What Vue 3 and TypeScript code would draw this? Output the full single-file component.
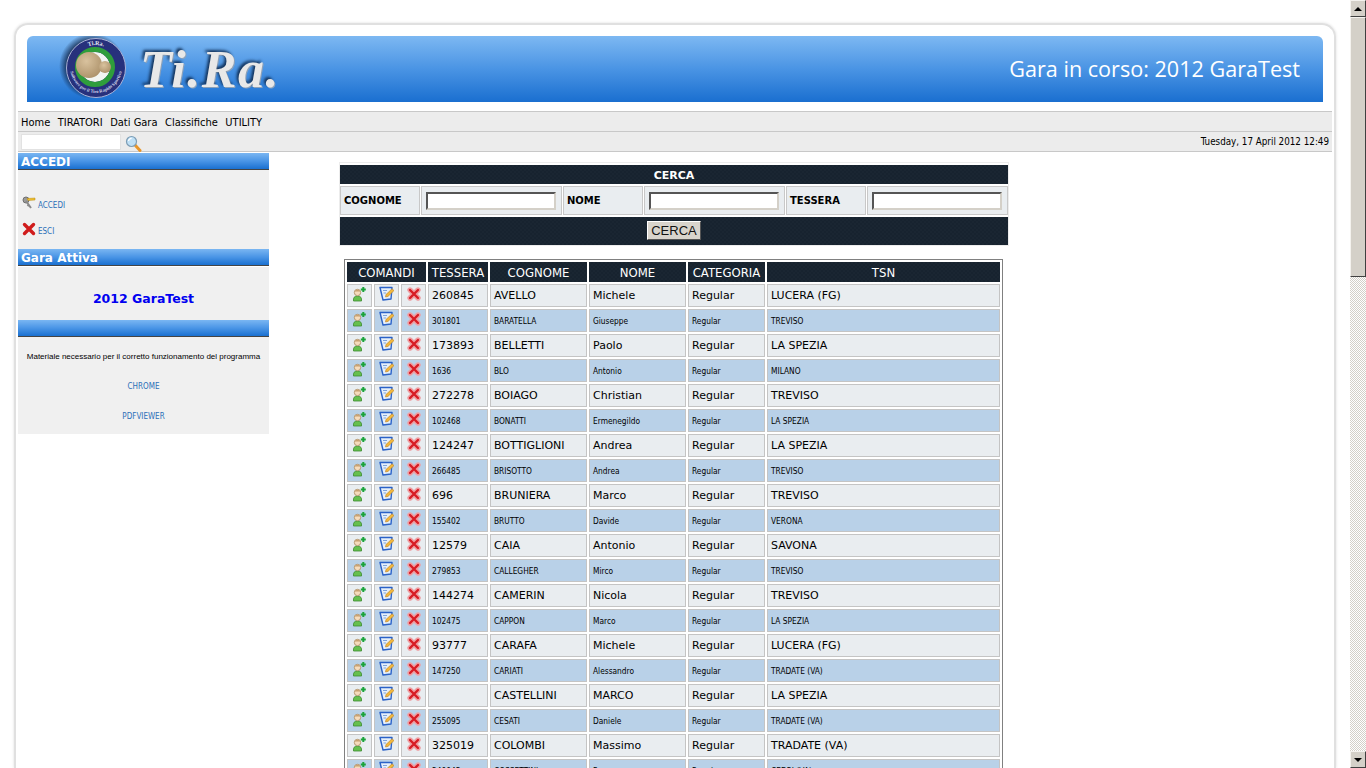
<script setup lang="ts">
interface Shooter {
    card: string;
    surname: string;
    name: string;
    club: string;
}

const menu = ['Home', 'TIRATORI', 'Dati Gara', 'Classifiche', 'UTILITY'];

const headers = ['TESSERA', 'COGNOME', 'NOME', 'CATEGORIA', 'TSN'];

const shooters: Shooter[] = [
    { card: '260845', surname: 'AVELLO', name: 'Michele', club: 'LUCERA (FG)' },
    { card: '301801', surname: 'BARATELLA', name: 'Giuseppe', club: 'TREVISO' },
    { card: '173893', surname: 'BELLETTI', name: 'Paolo', club: 'LA SPEZIA' },
    { card: '1636', surname: 'BLO', name: 'Antonio', club: 'MILANO' },
    { card: '272278', surname: 'BOIAGO', name: 'Christian', club: 'TREVISO' },
    { card: '102468', surname: 'BONATTI', name: 'Ermenegildo', club: 'LA SPEZIA' },
    { card: '124247', surname: 'BOTTIGLIONI', name: 'Andrea', club: 'LA SPEZIA' },
    { card: '266485', surname: 'BRISOTTO', name: 'Andrea', club: 'TREVISO' },
    { card: '696', surname: 'BRUNIERA', name: 'Marco', club: 'TREVISO' },
    { card: '155402', surname: 'BRUTTO', name: 'Davide', club: 'VERONA' },
    { card: '12579', surname: 'CAIA', name: 'Antonio', club: 'SAVONA' },
    { card: '279853', surname: 'CALLEGHER', name: 'Mirco', club: 'TREVISO' },
    { card: '144274', surname: 'CAMERIN', name: 'Nicola', club: 'TREVISO' },
    { card: '102475', surname: 'CAPPON', name: 'Marco', club: 'LA SPEZIA' },
    { card: '93777', surname: 'CARAFA', name: 'Michele', club: 'LUCERA (FG)' },
    { card: '147250', surname: 'CARIATI', name: 'Alessandro', club: 'TRADATE (VA)' },
    { card: '', surname: 'CASTELLINI', name: 'MARCO', club: 'LA SPEZIA' },
    { card: '255095', surname: 'CESATI', name: 'Daniele', club: 'TRADATE (VA)' },
    { card: '325019', surname: 'COLOMBI', name: 'Massimo', club: 'TRADATE (VA)' },
    { card: '240045', surname: 'COSSETTINI', name: 'Franco', club: 'CEDRI (VA)' },
];
</script>

<template>
    <div class="screen">
        <div class="page">
            <div class="frame">
                <header class="banner">
                    <svg class="logo" width="72" height="66" viewBox="0 0 72 66">
                        <defs>
                            <radialGradient id="logoShade" cx="0.5" cy="0.5" r="0.5">
                                <stop offset="0.75" stop-color="#0a1a3a" stop-opacity="0.8" />
                                <stop offset="1" stop-color="#0a1a3a" stop-opacity="0" />
                            </radialGradient>
                            <radialGradient id="ball" cx="0.4" cy="0.35" r="0.75">
                                <stop offset="0" stop-color="#d9c29e" />
                                <stop offset="1" stop-color="#a98e66" />
                            </radialGradient>
                            <path id="ringTop" d="M 15 32 A 23 23 0 0 1 61 32" />
                            <path id="ringBottom" d="M 12 31 A 26 26 0 0 0 64 31" />
                        </defs>
                        <circle cx="34" cy="30" r="33" fill="url(#logoShade)" />
                        <circle cx="38" cy="32" r="29.5" fill="#27317c" stroke="#aab2d6" stroke-width="1" />
                        <text class="ringText" fill="#e6e8f4" font-size="6"><textPath href="#ringTop" startOffset="50%" text-anchor="middle">Ti.Ra.</textPath></text>
                        <text class="ringText" fill="#d4d8ec" font-size="4.6"><textPath href="#ringBottom" startOffset="50%" text-anchor="middle">Software per il Tiro Rapido Sportivo</textPath></text>
                        <circle cx="37" cy="31" r="15" fill="#f2f5f2" />
                        <circle cx="37" cy="31" r="17.5" fill="none" stroke="#2f9e3c" stroke-width="5" />
                        <path d="M 38 23 L 46 31 L 38 39 Z" fill="#d81818" />
                        <circle cx="31" cy="29" r="13" fill="url(#ball)" />
                        <circle cx="47" cy="31" r="6" fill="url(#ball)" />
                    </svg>
                    <span class="brand">Ti.Ra.</span>
                    <span class="current">Gara in corso: 2012 GaraTest</span>
                </header>

                <nav class="menuBar">
                    <span v-for="item in menu" :key="item">{{ item }}</span>
                </nav>

                <div class="toolBar">
                    <input class="quickSearch" type="text" />
                    <svg class="lens" width="17" height="17" viewBox="0 0 17 17">
                        <path d="M10 10 L15 15.5" stroke="#e8962a" stroke-width="3" stroke-linecap="round" />
                        <circle cx="6.5" cy="6.5" r="5" fill="#bfe0f6" stroke="#7d9db5" stroke-width="1.2" />
                        <path d="M3.5 6 Q4 3.6 6.6 3.4" fill="none" stroke="#fff" stroke-width="1.2" />
                    </svg>
                    <span class="date">Tuesday, 17 April 2012 12:49</span>
                </div>

                <div class="body">
                    <aside class="side">
                        <h3 class="sideTitle">ACCEDI</h3>
                        <div class="sideBox loginBox">
                            <a class="sideLink">
                                <svg width="14" height="14" viewBox="0 0 14 14">
                                    <circle cx="4" cy="4" r="3" fill="#9a9a9a" stroke="#6f6f6f" />
                                    <path d="M4 5 L9 12 M7 8.5 L5.5 10" stroke="#8a8a8a" stroke-width="2" fill="none" />
                                    <path d="M5 2.5 L13 2 L13 4 L6 4.5 Z" fill="#f0c030" stroke="#b98a10" stroke-width="0.5" />
                                </svg>
                                <span>ACCEDI</span>
                            </a>
                            <a class="sideLink">
                                <svg width="14" height="14" viewBox="0 0 14 14">
                                    <path d="M2.5 2.5 L11.5 11.5 M11.5 2.5 L2.5 11.5" stroke="#d01c1c" stroke-width="3.4" stroke-linecap="round" />
                                </svg>
                                <span>ESCI</span>
                            </a>
                        </div>
                        <h3 class="sideTitle">Gara Attiva</h3>
                        <div class="sideBox activeBox">2012 GaraTest</div>
                        <h3 class="sideTitle emptyTitle"></h3>
                        <div class="sideBox infoBox">
                            <p class="infoText">Materiale necessario per il corretto funzionamento del programma</p>
                            <a class="infoLink">CHROME</a>
                            <a class="infoLink">PDFVIEWER</a>
                        </div>
                    </aside>

                    <main class="content">
                        <form class="searchBox" @submit.prevent>
                            <div class="searchTitle">CERCA</div>
                            <label class="searchLabel">COGNOME</label>
                            <div class="searchField"><input type="text" /></div>
                            <label class="searchLabel">NOME</label>
                            <div class="searchField"><input type="text" /></div>
                            <label class="searchLabel">TESSERA</label>
                            <div class="searchField"><input type="text" /></div>
                            <div class="searchAction"><button type="submit">CERCA</button></div>
                        </form>

                        <table class="results">
                            <colgroup>
                                <col class="colIcon" />
                                <col class="colIcon" />
                                <col class="colIcon" />
                                <col class="colCard" />
                                <col class="colText" />
                                <col class="colText" />
                                <col class="colCat" />
                                <col class="colClub" />
                            </colgroup>
                            <thead>
                                <tr>
                                    <th colspan="3">COMANDI</th>
                                    <th v-for="head in headers" :key="head">{{ head }}</th>
                                </tr>
                            </thead>
                            <tbody>
                                <tr v-for="shooter in shooters" :key="shooter.surname">
                                    <td class="iconCell userCell">
                                        <svg width="16" height="16" viewBox="0 0 16 16">
                                            <path d="M2.5 15 Q1.8 10 6.5 10 Q11.2 10 10.5 15 Z" fill="#66c04e" stroke="#3b8a2e" stroke-width="0.8" />
                                            <circle cx="6.5" cy="6.5" r="3.2" fill="#f6dcbc" stroke="#a98a60" stroke-width="0.8" />
                                            <path d="M3.4 5.5 Q6.5 1.8 9.6 5.5 Z" fill="#c7a070" />
                                            <path d="M12.3 1 V6 M9.8 3.5 H14.8" stroke="#1aa33a" stroke-width="2" />
                                        </svg>
                                    </td>
                                    <td class="iconCell">
                                        <svg width="16" height="16" viewBox="0 0 16 16">
                                            <path d="M1 1.5 H13 L12 13 L4 14 Z" fill="#e6f0fb" stroke="#2a62c8" stroke-width="1.4" stroke-linejoin="round" />
                                            <path d="M4 4.5 H8 M4.5 7 H7" stroke="#7fa4dc" stroke-width="1" />
                                            <path d="M6.5 11 L7 8.5 L13 2.8 L15 4.6 L9 10.4 Z" fill="#f4b83a" stroke="#b9812a" stroke-width="0.6" />
                                        </svg>
                                    </td>
                                    <td class="iconCell">
                                        <svg width="16" height="16" viewBox="0 0 16 16">
                                            <path d="M4 4 L12 12 M12 4 L4 12" stroke="#eea0a4" stroke-width="5.4" stroke-linecap="round" />
                                            <path d="M4 4 L12 12 M12 4 L4 12" stroke="#d81c24" stroke-width="2.4" stroke-linecap="round" />
                                        </svg>
                                    </td>
                                    <td>{{ shooter.card }}</td>
                                    <td>{{ shooter.surname }}</td>
                                    <td>{{ shooter.name }}</td>
                                    <td>Regular</td>
                                    <td>{{ shooter.club }}</td>
                                </tr>
                            </tbody>
                        </table>
                    </main>
                </div>
            </div>
        </div>

        <div class="scrollbar">
            <div class="scrollBtn"><i class="arrowUp"></i></div>
            <div class="scrollThumb"></div>
            <div class="scrollTrack"></div>
            <div class="scrollBtn"><i class="arrowDown"></i></div>
        </div>
    </div>
</template>

<style>
html,
body {
    margin: 0;
    overflow: hidden;
    background: #fff;
}
</style>

<style scoped>
.screen {
    display: flex;
    height: 768px;
    overflow: hidden;
    font-family: "DejaVu Sans", Verdana, sans-serif;
    color: #000;
}

.page {
    width: 1350px;
    padding: 23px 0 0 14px;
    box-sizing: border-box;
}

.frame {
    width: 1322px;
    box-sizing: border-box;
    padding: 11px 2px 0;
    border: 2px solid #e0e0e0;
    border-bottom: none;
    border-radius: 14px 14px 0 0;
    box-shadow: 0 0 3px #dedede;
    height: 745px;
}

.banner {
    display: flex;
    align-items: center;
    height: 66px;
    margin: 0 9px;
    border-radius: 6px 6px 0 0;
    background: linear-gradient(180deg, #7db8f2 0%, #4a94e4 50%, #1a6fd0 100%);
}

.logo {
    margin-left: 31px;
    flex: none;
}

.ringText {
    font-family: "Liberation Serif", serif;
    font-weight: bold;
}

.brand {
    margin-left: 10px;
    font-family: "Liberation Serif", serif;
    font-size: 52px;
    font-weight: bold;
    font-style: italic;
    letter-spacing: 1.5px;
    color: #e8e8e8;
    text-shadow: -2px -2px 3px #14345c, 1px 1px 0 #8fa4bc;
}

.current {
    margin: 0 23px 2px auto;
    font-family: "Open Sans", sans-serif;
    font-size: 21.6px;
    color: #fff;
}

.menuBar {
    display: flex;
    gap: 7.5px;
    height: 17px;
    margin-top: 9px;
    padding: 2px 0 0 3px;
    align-items: center;
    background: #ececec;
    border-top: 1px solid #c8c8c8;
    border-bottom: 1px solid #c8c8c8;
    font-family: "DejaVu Sans Condensed", sans-serif;
    font-size: 11px;
}

.toolBar {
    display: flex;
    align-items: center;
    height: 19px;
    padding: 0 3px;
    background: #ececec;
    border-bottom: 1px solid #c8c8c8;
}

.quickSearch {
    width: 100px;
    height: 16px;
    box-sizing: border-box;
    border: 1px solid #e2e2e2;
    background: #fff;
    padding: 0;
}

.lens {
    margin: 4px 0 0 4px;
}

.date {
    margin-left: auto;
    font-family: "DejaVu Sans Condensed", sans-serif;
    font-size: 9.75px;
}

.body {
    display: flex;
    align-items: flex-start;
    margin-top: 1px;
}

.side {
    width: 251px;
    flex: none;
}

.sideTitle {
    height: 16px;
    margin: 0;
    padding-left: 3px;
    overflow: hidden;
    background: linear-gradient(180deg, #7ab6f2 0%, #4a95e6 50%, #1a70d0 100%);
    border-bottom: 1px solid #444;
    color: #fff;
    font-size: 12px;
    line-height: 18px;
    font-weight: bold;
}

.sideBox {
    background: #f0f0f0;
}

.loginBox {
    display: flex;
    flex-direction: column;
    gap: 12px;
    height: 79px;
    padding: 26px 0 0 4px;
    box-sizing: border-box;
}

.sideLink {
    display: flex;
    align-items: flex-end;
    gap: 2px;
    color: #2a6fb8;
    font-family: "DejaVu Sans Condensed", sans-serif;
    font-size: 8px;
}

.activeBox {
    height: 43px;
    margin-top: 1px;
    padding-top: 10px;
    display: flex;
    align-items: center;
    justify-content: center;
    color: #0000f0;
    font-size: 12.5px;
    font-weight: bold;
}

.emptyTitle {
    height: 16px;
}

.infoBox {
    display: flex;
    flex-direction: column;
    align-items: center;
    height: 97px;
    padding-top: 15px;
    box-sizing: border-box;
    font-family: "Liberation Sans", sans-serif;
    font-size: 8px;
    line-height: 10px;
}

.infoText {
    margin: 0 0 20px;
}

.infoLink {
    color: #2a6fb8;
    margin-bottom: 20px;
    font-family: "DejaVu Sans Condensed", sans-serif;
}

.content {
    margin-left: 70px;
    padding-top: 9px;
}

.searchBox {
    display: grid;
    grid-template-columns: 80px 141px 80px 141px 80px 141px;
    grid-template-rows: 19px 29px 28px;
    gap: 2px 1px;
    width: 670px;
    box-sizing: border-box;
    padding: 2px 0 0;
    border: 1px solid #ececec;
}

.searchTitle {
    grid-column: 1 / -1;
    background: repeating-conic-gradient(#17232f 0 25%, #1a2632 0 50%) 0 0 / 4px 4px;
    color: #fff;
    font-size: 11px;
    font-weight: bold;
    line-height: 21px;
    text-align: center;
}

.searchLabel {
    display: flex;
    align-items: center;
    padding-left: 3px;
    background: #e9edf0;
    border: 1px solid #c8c8c8;
    font-size: 10px;
    font-weight: bold;
}

.searchField {
    display: flex;
    align-items: center;
    justify-content: center;
    background: #e9edf0;
    border: 1px solid #c8c8c8;
}

.searchField input {
    width: 130px;
    height: 18px;
    box-sizing: border-box;
    margin-right: 2px;
    padding: 0;
    background: #fff;
    border: 2px solid;
    border-color: #555 #d4d0c8 #d4d0c8 #555;
}

.searchAction {
    grid-column: 1 / -1;
    display: flex;
    align-items: center;
    justify-content: center;
    background: repeating-conic-gradient(#17232f 0 25%, #1a2632 0 50%) 0 0 / 4px 4px;
}

.searchAction button {
    width: 54px;
    height: 19px;
    margin-bottom: 2px;
    padding: 0;
    background: #d8d4cc;
    border: 1px solid;
    border-color: #fff #555 #555 #fff;
    font-family: "Liberation Sans", sans-serif;
    font-size: 13px;
    color: #111;
}

.results {
    margin: 13px 0 0 5px;
    table-layout: fixed;
    width: 659px;
    border: 1px solid #808080;
    border-spacing: 2px;
    border-collapse: separate;
}

.colIcon {
    width: 25px;
}

.colCard {
    width: 60px;
}

.colText {
    width: 97px;
}

.colCat {
    width: 77px;
}

.colClub {
    width: 233px;
}

.results th {
    height: 20px;
    box-sizing: border-box;
    padding: 1px 0 0;
    background: repeating-conic-gradient(#17232f 0 25%, #1a2632 0 50%) 0 0 / 4px 4px;
    color: #fff;
    font-size: 11.7px;
    font-weight: normal;
    text-align: center;
}

.results td {
    height: 23px;
    box-sizing: border-box;
    padding: 0 0 0 3px;
    background: #e9edf0;
    border: 1px solid #c4c4c4;
    font-size: 11px;
    white-space: nowrap;
    overflow: hidden;
}

.results tbody tr:nth-child(even) td {
    background: #b9d1e8;
    font-family: "DejaVu Sans Condensed", sans-serif;
    font-size: 8.3px;
}

.results td.iconCell {
    padding: 0;
    text-align: center;
    line-height: 0;
}

.iconCell svg {
    margin: -3px 0 0 1px;
}

.userCell svg {
    margin: -3px 1px 0 0;
}

.scrollbar {
    display: flex;
    flex-direction: column;
    width: 16px;
    flex: none;
}

.scrollBtn,
.scrollThumb {
    box-sizing: border-box;
    background: #d4d0c8;
    border: 1px solid;
    border-color: #f4f2ee #404040 #404040 #f4f2ee;
}

.scrollBtn {
    display: flex;
    align-items: center;
    justify-content: center;
    height: 17px;
    flex: none;
}

.scrollThumb {
    height: 260px;
    flex: none;
}

.scrollTrack {
    flex: 1;
    background: repeating-conic-gradient(#d4d0c8 0 25%, #fff 0 50%) 0 0 / 2px 2px;
}

.arrowUp,
.arrowDown {
    width: 0;
    height: 0;
    border-left: 4px solid transparent;
    border-right: 4px solid transparent;
}

.arrowUp {
    border-bottom: 4px solid #000;
}

.arrowDown {
    border-top: 4px solid #000;
}
</style>
